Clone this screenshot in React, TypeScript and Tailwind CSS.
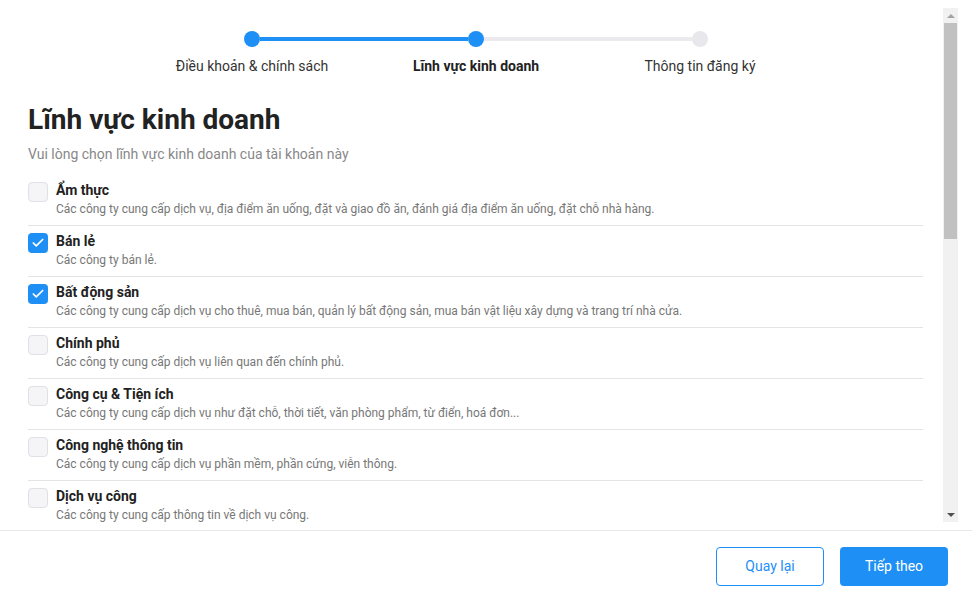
import { Check } from 'lucide-react';

interface Field {
  name: string;
  desc: string;
  checked?: boolean;
}

const fields: Field[] = [
  { name: 'Ẩm thực', desc: 'Các công ty cung cấp dịch vụ, địa điểm ăn uống, đặt và giao đồ ăn, đánh giá địa điểm ăn uống, đặt chỗ nhà hàng.' },
  { name: 'Bán lẻ', desc: 'Các công ty bán lẻ.', checked: true },
  { name: 'Bất động sản', desc: 'Các công ty cung cấp dịch vụ cho thuê, mua bán, quản lý bất động sản, mua bán vật liệu xây dựng và trang trí nhà cửa.', checked: true },
  { name: 'Chính phủ', desc: 'Các công ty cung cấp dịch vụ liên quan đến chính phủ.' },
  { name: 'Công cụ & Tiện ích', desc: 'Các công ty cung cấp dịch vụ như đặt chỗ, thời tiết, văn phòng phẩm, từ điển, hoá đơn...' },
  { name: 'Công nghệ thông tin', desc: 'Các công ty cung cấp dịch vụ phần mềm, phần cứng, viễn thông.' },
  { name: 'Dịch vụ công', desc: 'Các công ty cung cấp thông tin về dịch vụ công.' },
];

const Stepper = () => (
  <div className="ml-[140px] w-[672px]">
    <div className="flex items-center px-[104px]">
      <div className="w-4 h-4 rounded-full bg-[#1e8ff5] shrink-0" />
      <div className="flex-1 h-1 bg-[#1e8ff5]" />
      <div className="w-4 h-4 rounded-full bg-[#1e8ff5] shrink-0" />
      <div className="flex-1 h-1 bg-[#ebebef]" />
      <div className="w-4 h-4 rounded-full bg-[#e8e8ec] shrink-0" />
    </div>
    <div className="grid grid-cols-3 mt-[10px] text-[14px] leading-[18px] text-[#333]">
      <div className="text-center">Điều khoản &amp; chính sách</div>
      <div className="text-center font-bold text-[#222]">Lĩnh vực kinh doanh</div>
      <div className="text-center">Thông tin đăng ký</div>
    </div>
  </div>
);

const FieldRow = ({ field }: { field: Field }) => (
  <div className="flex gap-2 pt-[6px] pb-2 border-b border-[#e4e4e8]">
    <div
      className={`w-5 h-5 mt-[1px] rounded-[4px] shrink-0 flex items-center justify-center ${
        field.checked ? 'bg-[#1e8ff5]' : 'bg-[#f5f5f8] border border-[#e0e0e6]'
      }`}
    >
      {field.checked && <Check size={14} strokeWidth={3} color="white" />}
    </div>
    <div>
      <div className="text-[14px] leading-[18px] font-bold text-[#222]">{field.name}</div>
      <div className="mt-[2px] text-[12px] leading-[16px] text-[#777]">{field.desc}</div>
    </div>
  </div>
);

// classic scrollbar look, drawn since headless has overlay bars
const ScrollBar = () => (
  <div className="w-[15px] shrink-0 bg-[#f1f1f1] flex flex-col">
    <div className="h-[15px] flex items-center justify-center">
      <div className="w-0 h-0 border-l-[4px] border-r-[4px] border-b-[4px] border-l-transparent border-r-transparent border-b-[#a3a3a3]" />
    </div>
    <div className="h-[216px] mx-[1px] bg-[#c1c1c1]" />
    <div className="flex-1" />
    <div className="h-[15px] flex items-center justify-center">
      <div className="w-0 h-0 border-l-[4px] border-r-[4px] border-t-[4px] border-l-transparent border-r-transparent border-t-[#505050]" />
    </div>
  </div>
);

export default function App() {
  return (
    <div
      className="w-[972px] h-[595px] bg-white flex flex-col overflow-hidden"
      style={{ fontFamily: 'Roboto, "Noto Sans", sans-serif' }}
    >
      <div className="my-2 mr-[14px] h-[514px] flex">
        <div className="flex-1 overflow-hidden">
          <div className="pt-[23px]">
            <Stepper />
          </div>
          <div className="pl-7 pr-5 pb-6">
            <h1 className="mt-[28px] text-[28px] leading-[34px] font-bold text-[#222]">Lĩnh vực kinh doanh</h1>
            <p className="mt-[8px] text-[14px] leading-[18px] text-[#888]">Vui lòng chọn lĩnh vực kinh doanh của tài khoản này</p>
            <div className="mt-[12px]">
              {fields.map((f) => (
                <FieldRow key={f.name} field={f} />
              ))}
            </div>
          </div>
        </div>
        <ScrollBar />
      </div>
      <div className="border-t border-[#e8e8ec] flex justify-end gap-4 pt-4 pr-6">
        <button className="w-[108px] h-[39px] rounded-[4px] border border-[#1e8ff5] text-[#1e8ff5] text-[14px] bg-white">
          Quay lại
        </button>
        <button className="w-[108px] h-[39px] rounded-[4px] bg-[#1e8ff5] text-white text-[14px]">
          Tiếp theo
        </button>
      </div>
    </div>
  );
}
